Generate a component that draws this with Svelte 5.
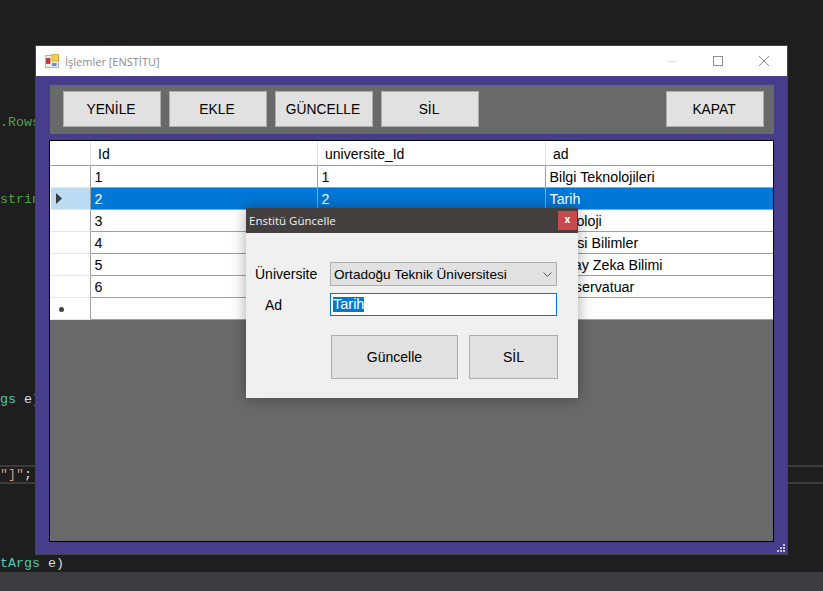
<script>
  const toolbar = ['YENİLE', 'EKLE', 'GÜNCELLE', 'SİL'];
  const columns = ['Id', 'universite_Id', 'ad'];
  const rows = [
    ['1', '1', 'Bilgi Teknolojileri'],
    ['2', '2', 'Tarih'],
    ['3', '3', 'Psikoloji'],
    ['4', '4', 'Siyasi Bilimler'],
    ['5', '5', 'Yapay Zeka Bilimi'],
    ['6', '6', 'Konservatuar'],
    ['', '', '']
  ];
</script>

<div class="desktop">
  <div class="code rows">.Rows</div>
  <div class="code str">strin</div>
  <div class="code args1"><span class="teal">gs</span> e)</div>
  <div class="current-line"></div>
  <div class="code quote"><span class="orange">"]"</span>;</div>
  <div class="code args2"><span class="teal">tArgs</span> e)</div>
  <div class="statusbar"></div>

  <div class="window">
    <div class="titlebar">
      <svg class="app-icon" width="14" height="14" viewBox="0 0 14 14">
        <rect x="0.5" y="1.5" width="13" height="12" fill="#ececec" stroke="#b4b4b4" />
        <rect x="7" y="0.5" width="6.5" height="6.5" fill="#f8cf4a" stroke="#c49a2c" stroke-width="0.7" />
        <rect x="1.5" y="4.5" width="3.5" height="5" fill="#d8322a" stroke="#93322b" stroke-width="0.7" />
        <rect x="7" y="9" width="4.5" height="3" fill="#5b8fdc" />
      </svg>
      <span class="title">İşlemler [ENSTİTU]</span>
      <div class="controls">
        <svg width="12" height="12" viewBox="0 0 12 12"><path d="M1 6.5h10" stroke="#e2e2e2" fill="none" /></svg>
        <svg width="12" height="12" viewBox="0 0 12 12"><rect x="1.5" y="1.5" width="9" height="9" stroke="#8f8f8f" fill="none" /></svg>
        <svg width="12" height="12" viewBox="0 0 12 12"><path d="M1 1l10 10M11 1L1 11" stroke="#8f8f8f" fill="none" /></svg>
      </div>
    </div>

    <div class="content">
      <div class="panel">
        {#each toolbar as label}
          <button class="btn">{label}</button>
        {/each}
        <button class="btn close">KAPAT</button>
      </div>

      <div class="grid">
        <div class="grid-row header">
          <div class="row-head"></div>
          {#each columns as col}
            <div class="cell">{col}</div>
          {/each}
        </div>
        {#each rows as row, i}
          <div class="grid-row" class:selected={i === 1}>
            <div class="row-head">
              {#if i === 1}
                <svg width="6" height="11" viewBox="0 0 6 11"><path d="M0 0l6 5.5L0 11z" fill="#3c3c3c" /></svg>
              {:else if i === 6}
                <span class="star"></span>
              {/if}
            </div>
            {#each row as value}
              <div class="cell">{value}</div>
            {/each}
          </div>
        {/each}
      </div>
    </div>

    <div class="grip">
      {#each [[6, 0], [3, 3], [6, 3], [0, 6], [3, 6], [6, 6]] as [x, y]}
        <i style="left:{x}px;top:{y}px"></i>
      {/each}
    </div>
  </div>

  <div class="dialog">
    <div class="dialog-title">
      <span>Enstitü Güncelle</span>
      <div class="dialog-close">x</div>
    </div>
    <div class="dialog-body">
      <div class="form">
        <div class="lbl">Üniversite</div>
        <div class="select">
          <span>Ortadoğu Teknik Üniversitesi</span>
          <svg width="9" height="5" viewBox="0 0 9 5"><path d="M0.5 0.5L4.5 4.5l4-4" stroke="#555" fill="none" /></svg>
        </div>
        <div class="lbl ad">Ad</div>
        <div class="input"><span class="sel-text">Tarih</span></div>
      </div>
      <div class="actions">
        <button class="dbtn update">Güncelle</button>
        <button class="dbtn remove">SİL</button>
      </div>
    </div>
  </div>
</div>

<style>
  :global(body) {
    margin: 0;
    background: #1e1e1e;
  }

  .desktop {
    position: relative;
    width: 823px;
    height: 591px;
    overflow: hidden;
    background: #1e1e1e;
    font-family: 'Liberation Sans', Arial, sans-serif;
  }

  .code {
    position: absolute;
    left: 0;
    font-family: 'Liberation Mono', monospace;
    font-size: 13.33px;
    line-height: 16px;
    color: #dcdcdc;
    white-space: pre;
  }
  .rows { top: 115px; color: #4ea24a; }
  .str { top: 192px; color: #4ea24a; }
  .args1 { top: 392px; }
  .quote { top: 467px; }
  .args2 { top: 556px; }
  .teal { color: #4ec9b0; }
  .orange { color: #d69d85; }

  .current-line {
    position: absolute;
    left: 0;
    right: 0;
    top: 465px;
    height: 15px;
    border-top: 2px solid #3c3c3c;
    border-bottom: 2px solid #3c3c3c;
  }

  .statusbar {
    position: absolute;
    left: 0;
    right: 0;
    bottom: 0;
    height: 19px;
    background: #3c3b40;
  }

  .window {
    position: absolute;
    left: 35px;
    top: 45px;
    width: 751px;
    height: 508px;
    border: 1px solid #454545;
    display: flex;
    flex-direction: column;
    background: #483d8b;
  }

  .titlebar {
    height: 30px;
    flex: none;
    background: #fff;
    display: flex;
    align-items: center;
    padding-left: 9px;
  }
  .app-icon { flex: none; }
  .title {
    margin-left: 6px;
    font-family: 'Open Sans', 'Noto Sans', sans-serif;
    font-size: 11px;
    color: #8a8a8a;
  }
  .controls {
    margin-left: auto;
    display: flex;
    gap: 34px;
    padding-right: 17px;
  }

  .content {
    flex: 1;
    padding: 9px 13px 12px 14px;
    display: flex;
    flex-direction: column;
    gap: 6px;
    min-height: 0;
  }

  .panel {
    height: 49px;
    box-sizing: border-box;
    flex: none;
    background: #696969;
    display: flex;
    align-items: flex-start;
    gap: 8px;
    padding: 6px 10px 0 13px;
  }

  .btn {
    width: 98px;
    height: 36px;
    background: #e1e1e1;
    border: 1px solid #adadad;
    padding: 0 2px 0 0;
    font-family: inherit;
    font-size: 13.8px;
    color: #000;
  }
  .close { margin-left: auto; }

  .grid {
    flex: 1;
    margin-left: -1px;
    background: #696969;
    border: 1px solid #000;
    display: flex;
    flex-direction: column;
  }

  .grid-row {
    display: grid;
    grid-template-columns: 41px 227px 228px 1fr;
    grid-template-rows: 21px;
    height: 22px;
    background: #fff;
    border-bottom: 1px solid #a0a0a0;
    box-sizing: border-box;
    font-size: 14.25px;
    color: #000;
  }
  .grid-row.header {
    grid-template-rows: 23px;
    height: 25px;
    padding-top: 1px;
    font-size: 14px;
  }
  .grid-row.header .cell {
    padding-left: 7px;
    padding-top: 2px;
    border-right-color: #e3e3e3;
  }

  .row-head {
    border-left: 1px solid #fff;
    border-right: 1px solid #a0a0a0;
    display: flex;
    align-items: center;
    padding-left: 5px;
    border-bottom: 1px solid #e6e6e6;
    margin-bottom: -1px;
  }
  .grid-row.header .row-head {
    border-bottom: none;
    border-right-color: #e3e3e3;
    margin: 0;
  }
  .selected .row-head {
    background: #bcdcf4;
  }

  .cell {
    box-sizing: border-box;
    padding: 1px 0 0 3.5px;
    line-height: 21px;
    border-right: 1px solid #a0a0a0;
    white-space: nowrap;
    overflow: hidden;
  }
  .cell:last-child { border-right: none; }

  .selected .cell {
    background: #0078d7;
    color: #fff;
  }

  .star {
    width: 5px;
    height: 5px;
    margin: 1px 0 0 3px;
    border-radius: 50%;
    background: #444;
  }

  .grip {
    position: absolute;
    right: 2px;
    bottom: 2px;
    width: 8px;
    height: 8px;
  }
  .grip i {
    position: absolute;
    width: 2px;
    height: 2px;
    background: #c4c4c8;
  }

  .dialog {
    position: absolute;
    left: 246px;
    top: 208px;
    width: 332px;
    height: 190px;
    background: #f0f0f0;
    box-shadow: 0 0 14px rgba(0, 0, 0, 0.35);
    display: flex;
    flex-direction: column;
  }

  .dialog-title {
    height: 25px;
    flex: none;
    background: #433f3f;
    color: #f2f2f2;
    font-family: 'Open Sans', 'Noto Sans', sans-serif;
    font-size: 11.5px;
    display: flex;
    align-items: center;
    justify-content: space-between;
    padding: 0 1px 0 3px;
  }
  .dialog-close {
    width: 19px;
    height: 19px;
    background: #c64a4a;
    color: #fff;
    font-size: 10px;
    font-weight: 700;
    text-align: center;
    line-height: 17px;
  }

  .dialog-body {
    flex: 1;
    padding: 29px 21px 19px 9px;
    display: flex;
    flex-direction: column;
    font-size: 14px;
    color: #000;
  }

  .form {
    display: grid;
    grid-template-columns: 75px 1fr;
    grid-template-rows: 24px 23px;
    row-gap: 7px;
    align-items: center;
  }
  .lbl.ad { padding-left: 10px; }

  .select {
    height: 24px;
    box-sizing: border-box;
    border: 1px solid #adadad;
    background: #e1e1e1;
    display: flex;
    align-items: center;
    justify-content: space-between;
    padding: 0 4px 0 3px;
    font-size: 13.6px;
  }

  .input {
    height: 23px;
    box-sizing: border-box;
    border: 1px solid #0078d7;
    background: #fff;
    display: flex;
    align-items: center;
    padding-left: 2px;
    font-size: 14.5px;
  }
  .sel-text {
    background: #0078d7;
    color: #fff;
    line-height: 15px;
  }

  .actions {
    display: flex;
    gap: 11px;
    margin-top: 19px;
    padding-left: 76px;
  }
  .dbtn {
    flex: none;
    height: 44px;
    background: #e1e1e1;
    border: 1px solid #adadad;
    padding: 0;
    font-family: inherit;
    font-size: 14px;
    color: #000;
  }
  .update { width: 127px; }
  .remove { width: 89px; }
</style>
